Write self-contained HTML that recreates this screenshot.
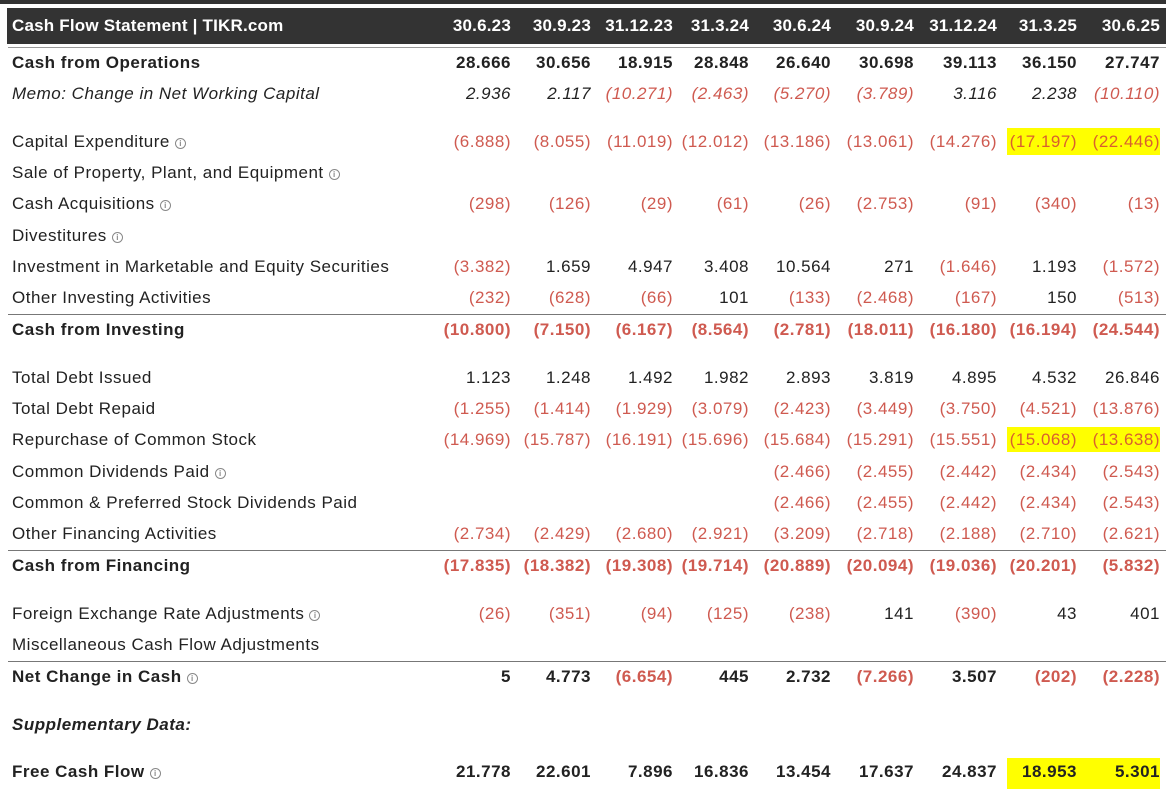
<!DOCTYPE html>
<html><head><meta charset="utf-8">
<style>
*{margin:0;padding:0;box-sizing:border-box}
body{width:1166px;height:789px;background:#fff;position:relative;overflow:hidden;font-family:"Liberation Sans",Arial,sans-serif;font-size:17px;letter-spacing:0.5px;color:#222}
.top{position:absolute;left:0;top:0;width:1166px;height:4px;background:#333}
.hdr{position:absolute;left:7px;top:8px;width:1159px;height:36px;background:#333;color:#fff;font-weight:bold}
.hdr .row{width:1159px;letter-spacing:0.2px}
.row{position:absolute;left:0;width:1166px;height:24px;line-height:24px}
.l{position:absolute;left:12px;white-space:nowrap}
.c{position:absolute;white-space:nowrap;text-align:right}
.c1{right:655px}.c2{right:575px}.c3{right:493px}.c4{right:417px}.c5{right:335px}.c6{right:252px}.c7{right:169px}.c8{right:89px}.c9{right:6px}
.r{color:#cf5a50}
.b{font-weight:bold}
.i{font-style:italic}
.hl .c8.r,.hl .c9.r{color:#d9602e}
.line{position:absolute;left:8px;width:1158px;height:1px;background:#777}
.ic{display:inline-block;width:11px;height:11px;border:1px solid #888;border-radius:50%;font-size:8px;line-height:9px;text-align:center;color:#888;vertical-align:1px;margin-left:5px;font-weight:bold;letter-spacing:0;font-style:normal}
.y{position:absolute;left:1007px;width:153px;background:#ffff00}
</style></head><body>
<div class="top"></div>
<div class="hdr">
 <div class="row" style="top:6px"><span class="l" style="left:5px">Cash Flow Statement | TIKR.com</span>
 <span class="c c1">30.6.23</span><span class="c c2">30.9.23</span><span class="c c3">31.12.23</span><span class="c c4">31.3.24</span><span class="c c5">30.6.24</span><span class="c c6">30.9.24</span><span class="c c7">31.12.24</span><span class="c c8">31.3.25</span><span class="c c9">30.6.25</span></div>
</div>
<div class="line" style="top:47px;background:#999"></div>
<div class="line" style="top:314px"></div>
<div class="line" style="top:550px"></div>
<div class="line" style="top:661px"></div>
<div class="y" style="top:128px;height:27px"></div>
<div class="y" style="top:427px;height:25px"></div>
<div class="y" style="top:758px;height:31px"></div>

<div class="row b" style="top:51px"><span class="l">Cash from Operations</span><span class="c c1">28.666</span><span class="c c2">30.656</span><span class="c c3">18.915</span><span class="c c4">28.848</span><span class="c c5">26.640</span><span class="c c6">30.698</span><span class="c c7">39.113</span><span class="c c8">36.150</span><span class="c c9">27.747</span></div>
<div class="row i" style="top:82px"><span class="l">Memo: Change in Net Working Capital</span><span class="c c1">2.936</span><span class="c c2">2.117</span><span class="c c3 r">(10.271)</span><span class="c c4 r">(2.463)</span><span class="c c5 r">(5.270)</span><span class="c c6 r">(3.789)</span><span class="c c7">3.116</span><span class="c c8">2.238</span><span class="c c9 r">(10.110)</span></div>
<div class="row hl" style="top:130px"><span class="l">Capital Expenditure<span class="ic">i</span></span><span class="c c1 r">(6.888)</span><span class="c c2 r">(8.055)</span><span class="c c3 r">(11.019)</span><span class="c c4 r">(12.012)</span><span class="c c5 r">(13.186)</span><span class="c c6 r">(13.061)</span><span class="c c7 r">(14.276)</span><span class="c c8 r">(17.197)</span><span class="c c9 r">(22.446)</span></div>
<div class="row" style="top:161px"><span class="l">Sale of Property, Plant, and Equipment<span class="ic">i</span></span></div>
<div class="row" style="top:192px"><span class="l">Cash Acquisitions<span class="ic">i</span></span><span class="c c1 r">(298)</span><span class="c c2 r">(126)</span><span class="c c3 r">(29)</span><span class="c c4 r">(61)</span><span class="c c5 r">(26)</span><span class="c c6 r">(2.753)</span><span class="c c7 r">(91)</span><span class="c c8 r">(340)</span><span class="c c9 r">(13)</span></div>
<div class="row" style="top:224px"><span class="l">Divestitures<span class="ic">i</span></span></div>
<div class="row" style="top:255px"><span class="l">Investment in Marketable and Equity Securities</span><span class="c c1 r">(3.382)</span><span class="c c2">1.659</span><span class="c c3">4.947</span><span class="c c4">3.408</span><span class="c c5">10.564</span><span class="c c6">271</span><span class="c c7 r">(1.646)</span><span class="c c8">1.193</span><span class="c c9 r">(1.572)</span></div>
<div class="row" style="top:286px"><span class="l">Other Investing Activities</span><span class="c c1 r">(232)</span><span class="c c2 r">(628)</span><span class="c c3 r">(66)</span><span class="c c4">101</span><span class="c c5 r">(133)</span><span class="c c6 r">(2.468)</span><span class="c c7 r">(167)</span><span class="c c8">150</span><span class="c c9 r">(513)</span></div>
<div class="row b" style="top:318px"><span class="l">Cash from Investing</span><span class="c c1 r">(10.800)</span><span class="c c2 r">(7.150)</span><span class="c c3 r">(6.167)</span><span class="c c4 r">(8.564)</span><span class="c c5 r">(2.781)</span><span class="c c6 r">(18.011)</span><span class="c c7 r">(16.180)</span><span class="c c8 r">(16.194)</span><span class="c c9 r">(24.544)</span></div>
<div class="row" style="top:366px"><span class="l">Total Debt Issued</span><span class="c c1">1.123</span><span class="c c2">1.248</span><span class="c c3">1.492</span><span class="c c4">1.982</span><span class="c c5">2.893</span><span class="c c6">3.819</span><span class="c c7">4.895</span><span class="c c8">4.532</span><span class="c c9">26.846</span></div>
<div class="row" style="top:397px"><span class="l">Total Debt Repaid</span><span class="c c1 r">(1.255)</span><span class="c c2 r">(1.414)</span><span class="c c3 r">(1.929)</span><span class="c c4 r">(3.079)</span><span class="c c5 r">(2.423)</span><span class="c c6 r">(3.449)</span><span class="c c7 r">(3.750)</span><span class="c c8 r">(4.521)</span><span class="c c9 r">(13.876)</span></div>
<div class="row hl" style="top:428px"><span class="l">Repurchase of Common Stock</span><span class="c c1 r">(14.969)</span><span class="c c2 r">(15.787)</span><span class="c c3 r">(16.191)</span><span class="c c4 r">(15.696)</span><span class="c c5 r">(15.684)</span><span class="c c6 r">(15.291)</span><span class="c c7 r">(15.551)</span><span class="c c8 r">(15.068)</span><span class="c c9 r">(13.638)</span></div>
<div class="row" style="top:460px"><span class="l">Common Dividends Paid<span class="ic">i</span></span><span class="c c5 r">(2.466)</span><span class="c c6 r">(2.455)</span><span class="c c7 r">(2.442)</span><span class="c c8 r">(2.434)</span><span class="c c9 r">(2.543)</span></div>
<div class="row" style="top:491px"><span class="l">Common &amp; Preferred Stock Dividends Paid</span><span class="c c5 r">(2.466)</span><span class="c c6 r">(2.455)</span><span class="c c7 r">(2.442)</span><span class="c c8 r">(2.434)</span><span class="c c9 r">(2.543)</span></div>
<div class="row" style="top:522px"><span class="l">Other Financing Activities</span><span class="c c1 r">(2.734)</span><span class="c c2 r">(2.429)</span><span class="c c3 r">(2.680)</span><span class="c c4 r">(2.921)</span><span class="c c5 r">(3.209)</span><span class="c c6 r">(2.718)</span><span class="c c7 r">(2.188)</span><span class="c c8 r">(2.710)</span><span class="c c9 r">(2.621)</span></div>
<div class="row b" style="top:554px"><span class="l">Cash from Financing</span><span class="c c1 r">(17.835)</span><span class="c c2 r">(18.382)</span><span class="c c3 r">(19.308)</span><span class="c c4 r">(19.714)</span><span class="c c5 r">(20.889)</span><span class="c c6 r">(20.094)</span><span class="c c7 r">(19.036)</span><span class="c c8 r">(20.201)</span><span class="c c9 r">(5.832)</span></div>
<div class="row" style="top:602px"><span class="l">Foreign Exchange Rate Adjustments<span class="ic">i</span></span><span class="c c1 r">(26)</span><span class="c c2 r">(351)</span><span class="c c3 r">(94)</span><span class="c c4 r">(125)</span><span class="c c5 r">(238)</span><span class="c c6">141</span><span class="c c7 r">(390)</span><span class="c c8">43</span><span class="c c9">401</span></div>
<div class="row" style="top:633px"><span class="l">Miscellaneous Cash Flow Adjustments</span></div>
<div class="row b" style="top:665px"><span class="l">Net Change in Cash<span class="ic">i</span></span><span class="c c1">5</span><span class="c c2">4.773</span><span class="c c3 r">(6.654)</span><span class="c c4">445</span><span class="c c5">2.732</span><span class="c c6 r">(7.266)</span><span class="c c7">3.507</span><span class="c c8 r">(202)</span><span class="c c9 r">(2.228)</span></div>
<div class="row b i" style="top:713px"><span class="l">Supplementary Data:</span></div>
<div class="row b" style="top:760px"><span class="l">Free Cash Flow<span class="ic">i</span></span><span class="c c1">21.778</span><span class="c c2">22.601</span><span class="c c3">7.896</span><span class="c c4">16.836</span><span class="c c5">13.454</span><span class="c c6">17.637</span><span class="c c7">24.837</span><span class="c c8">18.953</span><span class="c c9">5.301</span></div>
</body></html>
